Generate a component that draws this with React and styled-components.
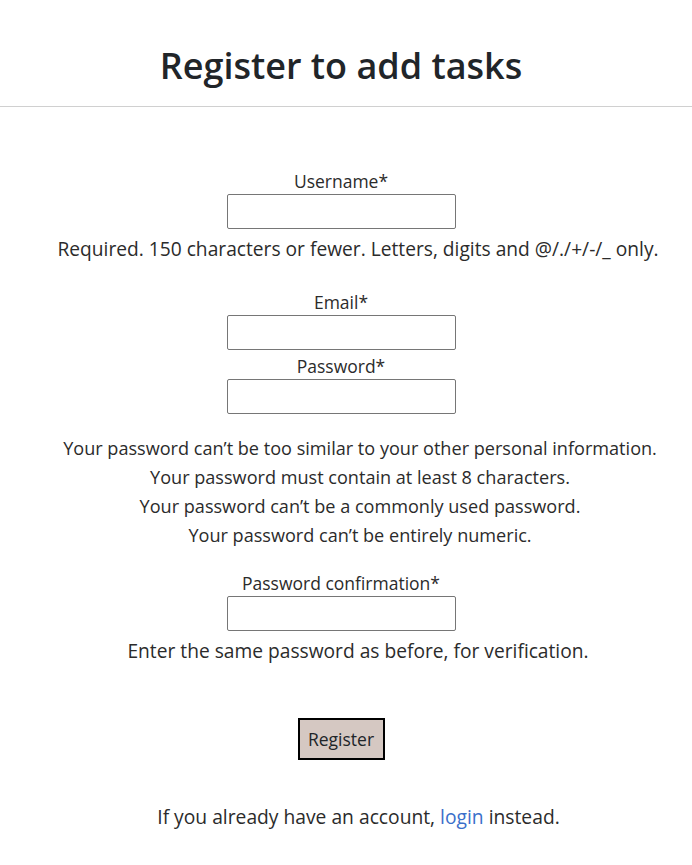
import React from 'react';
import styled, { createGlobalStyle } from 'styled-components';

const GlobalStyle = createGlobalStyle`
    * {
        box-sizing: border-box;
    }
    body {
        margin: 0;
        background: #ffffff;
        color: #212529;
        font-family: 'Open Sans', 'Noto Sans', sans-serif;
    }
`;

const Header = styled.header`
    border-bottom: 1px solid #d0d0d0;
    padding: 40px 10px 14px 0;
    text-align: center;
`;

const Title = styled.h1`
    margin: 0;
    font-size: 36px;
    font-weight: 600;
    line-height: 52px;
    color: #212529;
`;

const Form = styled.form`
    display: flex;
    flex-direction: column;
    align-items: center;
    padding: 62px 10px 0 0;
    text-align: center;
`;

const Field = styled.div`
    display: flex;
    flex-direction: column;
    align-items: center;
    margin-top: ${p => p.$gap || 0}px;
`;

const Label = styled.label`
    font-size: 17.5px;
    line-height: 24px;
    color: #2b2b2b;
    margin-bottom: 1px;
`;

const Input = styled.input`
    width: 229px;
    height: 35px;
    border: 1px solid #767676;
    border-radius: 2px;
    background: #fff;
    font-size: 16px;
    padding: 0 4px;
`;

const Help = styled.span`
    display: block;
    font-size: 19.2px;
    line-height: 24px;
    color: #2b2b2b;
    margin: 8px 0 0 34px;
    white-space: nowrap;
`;

const HelpList = styled.ul`
    list-style: none;
    margin: 20px 0 0 38px;
    padding: 0;
    font-size: 18.1px;
    line-height: 29px;
    color: #2b2b2b;
    white-space: nowrap;
`;

const Button = styled.button`
    margin-top: 55px;
    width: 87px;
    height: 42px;
    background: #d5c8c2;
    border: 2px solid #000;
    border-radius: 0;
    font-family: inherit;
    font-size: 17.5px;
    color: #212529;
    padding: 0;
`;

const Footer = styled.p`
    margin: 45px 0 0;
    padding-left: 25px;
    font-size: 19.25px;
    line-height: 24px;
    color: #2b2b2b;
    text-align: center;
`;

const Link = styled.a`
    color: #3b6fca;
    text-decoration: none;
`;

const passwordRules = [
    'Your password can’t be too similar to your other personal information.',
    'Your password must contain at least 8 characters.',
    'Your password can’t be a commonly used password.',
    'Your password can’t be entirely numeric.'
];

const App = () => {
    return (
        <>
            <GlobalStyle />
            <Header>
                <Title>Register to add tasks</Title>
            </Header>
            <Form onSubmit={e => e.preventDefault()}>
                <Field>
                    <Label htmlFor="username">Username*</Label>
                    <Input id="username" type="text" />
                    <Help>
                        Required. 150 characters or fewer. Letters, digits and @/./+/-/_ only.
                    </Help>
                </Field>
                <Field $gap={29}>
                    <Label htmlFor="email">Email*</Label>
                    <Input id="email" type="email" />
                </Field>
                <Field $gap={4}>
                    <Label htmlFor="password1">Password*</Label>
                    <Input id="password1" type="password" />
                    <HelpList>
                        {passwordRules.map(rule => (
                            <li key={rule}>{rule}</li>
                        ))}
                    </HelpList>
                </Field>
                <Field $gap={21}>
                    <Label htmlFor="password2">Password confirmation*</Label>
                    <Input id="password2" type="password" />
                    <Help>Enter the same password as before, for verification.</Help>
                </Field>
                <Button type="submit">Register</Button>
            </Form>
            <Footer>
                If you already have an account, <Link href="#">login</Link> instead.
            </Footer>
        </>
    );
};

export default App;
